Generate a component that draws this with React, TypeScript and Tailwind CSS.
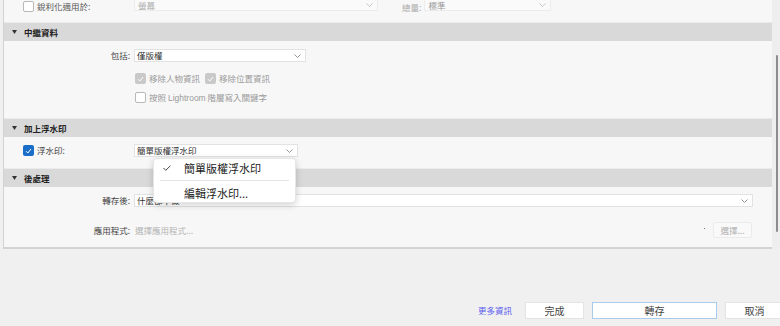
import React from "react";

const Chevron = () => (
  <svg width="7" height="4" viewBox="0 0 7 4" className="shrink-0">
    <path d="M0.5 0.5 L3.5 3.5 L6.5 0.5" fill="none" stroke="#8a8a8a" strokeWidth="0.9" />
  </svg>
);

const Tick = ({ color = "#fff" }: { color?: string }) => (
  <svg width="7" height="6" viewBox="0 0 7 6">
    <path d="M1 3.2 L2.8 5 L6 1" fill="none" stroke={color} strokeWidth="1" />
  </svg>
);

type BoxKind = "empty" | "disabled" | "blue";

const Box = ({ kind }: { kind: BoxKind }) => {
  if (kind === "blue")
    return (
      <span className="w-[11px] h-[11px] rounded-[2px] bg-[#1b6ec8] flex items-center justify-center shrink-0">
        <Tick />
      </span>
    );
  if (kind === "disabled")
    return (
      <span className="w-[11px] h-[11px] rounded-[2px] bg-[#c9c9c9] flex items-center justify-center shrink-0">
        <Tick />
      </span>
    );
  return <span className="w-[11px] h-[11px] rounded-[2px] bg-white border border-[#b8b8b8] shrink-0" />;
};

const Header = ({ title }: { title: string }) => (
  <div className="h-[19px] border-t border-[#ebebeb] bg-[#d9d9d9] flex items-center pl-[8px] shrink-0">
    <svg width="5" height="4" viewBox="0 0 5 4" className="mr-[7px]">
      <path d="M0 0 L5 0 L2.5 4 Z" fill="#333" />
    </svg>
    <span className="text-[8.5px] font-bold text-[#222] leading-none">{title}</span>
  </div>
);

const Label = ({ children }: { children: React.ReactNode }) => (
  <span className="w-[127px] text-right pr-[1px] text-[8.5px] text-[#444] leading-none shrink-0">{children}</span>
);

export default function App() {
  return (
    <div className="w-[780px] h-[326px] overflow-hidden bg-[#f0f0f0] flex flex-col font-['Noto_Sans_CJK_TC',sans-serif]">
      <div className="flex h-[249px] shrink-0">
        <div className="relative ml-[3px] w-[769px] border-l border-b-2 border-[#d3d3d3] bg-[#f7f7f7] flex flex-col">
          {/* sharpening row (scrolled) */}
          <div className="h-[22px] flex items-start shrink-0">
            <div className="flex items-center pl-[19px] pt-[1px] w-[130px]">
              <Box kind="empty" />
              <span className="ml-[3px] text-[8.5px] text-[#555] leading-none">銳利化適用於:</span>
            </div>
            <div className="w-[244px] h-[11px] bg-[#fafafa] border border-t-0 border-[#ececec] flex items-center justify-between pl-[3px] pr-[4px]">
              <span className="text-[8.5px] text-[#b0b0b0] leading-none">螢幕</span>
              <span className="opacity-50"><Chevron /></span>
            </div>
            <span className="ml-[24px] text-[8.5px] text-[#aaa] leading-none pt-[3px]">總量:</span>
            <div className="ml-[3px] w-[127px] h-[11px] bg-[#fafafa] border border-t-0 border-[#ececec] flex items-center justify-between pl-[3px] pr-[4px]">
              <span className="text-[8.5px] text-[#999] leading-none">標準</span>
              <span className="opacity-50"><Chevron /></span>
            </div>
          </div>

          <Header title="中繼資料" />
          <div className="h-[77px] shrink-0 pt-[8px] flex flex-col">
            <div className="flex items-center h-[13px]">
              <Label>包括:</Label>
              <div className="ml-[3px] w-[172px] h-[13px] bg-white border border-[#e2e2e2] flex items-center justify-between pl-[2px] pr-[4px]">
                <span className="text-[8.5px] text-[#333] leading-none">僅版權</span>
                <Chevron />
              </div>
            </div>
            <div className="flex items-center mt-[11px] pl-[131px]">
              <Box kind="disabled" />
              <span className="ml-[3px] text-[8.5px] text-[#9a9a9a] leading-none">移除人物資訊</span>
              <span className="ml-[5px]"><Box kind="disabled" /></span>
              <span className="ml-[3px] text-[8.5px] text-[#9a9a9a] leading-none">移除位置資訊</span>
            </div>
            <div className="flex items-center mt-[8px] pl-[131px]">
              <Box kind="empty" />
              <span className="ml-[3px] text-[8.5px] text-[#9a9a9a] leading-none">
                按照 <span className="font-['Liberation_Sans',sans-serif]">Lightroom</span> 階層寫入關鍵字
              </span>
            </div>
          </div>

          <Header title="加上浮水印" />
          <div className="h-[31px] shrink-0 pt-[7px] flex items-start">
            <div className="flex items-center pl-[19px] w-[130px] h-[13px]">
              <Box kind="blue" />
              <span className="ml-[3px] text-[8.5px] text-[#444] leading-none">浮水印:</span>
            </div>
            <div className="w-[164px] h-[13px] bg-white border border-[#e2e2e2] flex items-center justify-between pl-[2px] pr-[4px]">
              <span className="text-[8.5px] text-[#333] leading-none">簡單版權浮水印</span>
              <Chevron />
            </div>
          </div>

          <Header title="後處理" />
          <div className="flex-1 pt-[7px] flex flex-col">
            <div className="flex items-center h-[13px]">
              <Label>轉存後:</Label>
              <div className="ml-[3px] w-[619px] h-[13px] bg-white border border-[#e2e2e2] flex items-center justify-between pl-[2px] pr-[4px]">
                <span className="text-[8.5px] text-[#333] leading-none">什麼都不做</span>
                <Chevron />
              </div>
            </div>
            <div className="flex items-center mt-[15px] h-[16px]">
              <Label>應用程式:</Label>
              <span className="ml-[4px] text-[8.5px] text-[#b5b5b5] leading-none flex-1">選擇應用程式...</span>
              <span className="w-[1px] h-[1.5px] bg-[#777] mr-[8px] -mt-[3px]" />
              <div className="w-[39px] h-[16px] border border-[#ebebeb] bg-[#f9f9f9] rounded-[2px] flex items-center justify-center mr-[20px]">
                <span className="text-[8.5px] text-[#b0b0b0] leading-none">選擇...</span>
              </div>
            </div>
          </div>

          {/* watermark dropdown menu */}
          <div className="absolute left-[149px] top-[158px] w-[143px] bg-white border border-[#e6e6e6] rounded-[4px] shadow-[0_2px_7px_rgba(0,0,0,0.18)] flex flex-col">
            <div className="h-[18px] flex items-center pl-[9px]">
              <span className="w-[8px] flex items-center">
                <svg width="8" height="6" viewBox="0 0 8 6">
                  <path d="M0.5 3 L2.8 5.3 L7.5 0.6" fill="none" stroke="#333" strokeWidth="0.9" />
                </svg>
              </span>
              <span className="ml-[13px] text-[11px] text-[#222] leading-none">簡單版權浮水印</span>
            </div>
            <div className="mx-[6px] mt-[3px] h-px bg-[#e3e3e3]" />
            <div className="mt-[3px] h-[18px] flex items-center pl-[30px]">
              <span className="text-[11px] text-[#222] leading-none">編輯浮水印...</span>
            </div>
          </div>
        </div>

        {/* scrollbar */}
        <div className="w-[8px] bg-[#eeeeee] flex justify-end pr-[2px]">
          <div className="mt-[55px] h-[177px] w-[2px] bg-[#8d8d8d] rounded-full" />
        </div>
      </div>

      {/* footer */}
      <div className="flex items-center pl-[478px] pt-[53px]">
        <span className="text-[8.5px] text-[#5b5bef] leading-none w-[34px] shrink-0">更多資訊</span>
        <button className="ml-[13px] w-[59px] h-[17px] shrink-0 bg-white border border-[#e4e4e4] text-[10px] text-[#444] leading-none">完成</button>
        <button className="ml-[8px] w-[125px] h-[17px] shrink-0 bg-white border border-[#a8cbec] text-[10px] text-[#444] leading-none">轉存</button>
        <button className="ml-[8px] w-[59px] h-[17px] shrink-0 bg-white border border-[#e4e4e4] text-[10px] text-[#444] leading-none">取消</button>
      </div>
    </div>
  );
}
